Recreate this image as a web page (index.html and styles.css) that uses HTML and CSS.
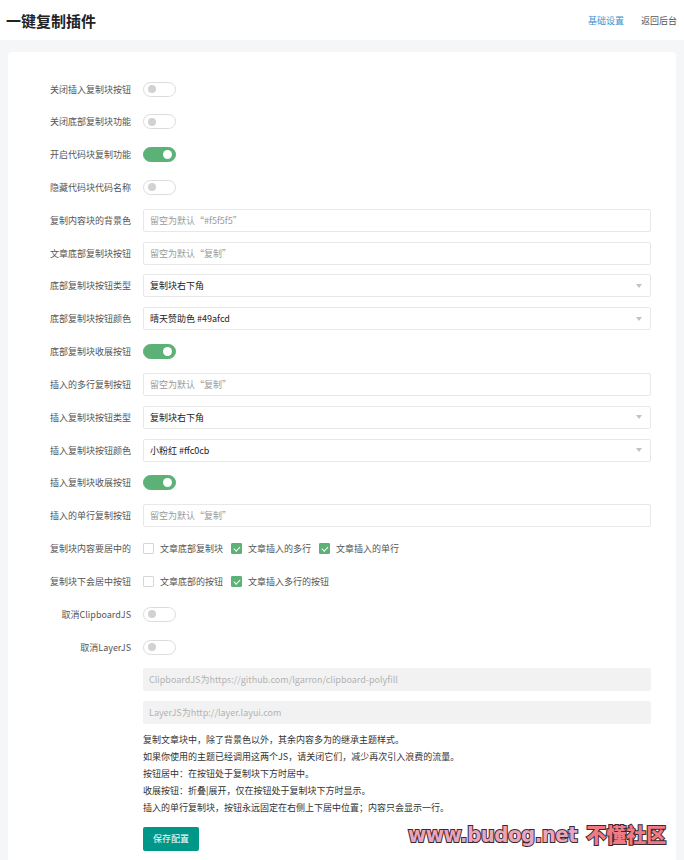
FILE: index.html
```html
<!DOCTYPE html>
<html lang="zh">
<head>
<meta charset="utf-8">
<title>一键复制插件</title>
<link rel="stylesheet" href="styles.css">
</head>
<body>
<header class="topbar">
  <h1 class="title">一键复制插件</h1>
  <nav class="nav">
    <a class="nav-link active">基础设置</a>
    <a class="nav-link">返回后台</a>
  </nav>
</header>
<main class="page">
  <section class="card">
    <div class="form">
      <div class="row"><label class="label">关闭插入复制块按钮</label><span class="switch"><span class="knob"></span></span></div>
      <div class="row"><label class="label">关闭底部复制块功能</label><span class="switch"><span class="knob"></span></span></div>
      <div class="row"><label class="label">开启代码块复制功能</label><span class="switch on"><span class="knob"></span></span></div>
      <div class="row"><label class="label">隐藏代码块代码名称</label><span class="switch"><span class="knob"></span></span></div>
      <div class="row"><label class="label">复制内容块的背景色</label><input class="input" placeholder="留空为默认“#f5f5f5”"></div>
      <div class="row"><label class="label">文章底部复制块按钮</label><input class="input" placeholder="留空为默认“复制”"></div>
      <div class="row"><label class="label">底部复制块按钮类型</label><div class="select"><span>复制块右下角</span><i class="arrow"></i></div></div>
      <div class="row"><label class="label">底部复制块按钮颜色</label><div class="select"><span>晴天赞助色 #49afcd</span><i class="arrow"></i></div></div>
      <div class="row"><label class="label">底部复制块收展按钮</label><span class="switch on"><span class="knob"></span></span></div>
      <div class="row"><label class="label">插入的多行复制按钮</label><input class="input" placeholder="留空为默认“复制”"></div>
      <div class="row"><label class="label">插入复制块按钮类型</label><div class="select"><span>复制块右下角</span><i class="arrow"></i></div></div>
      <div class="row"><label class="label">插入复制块按钮颜色</label><div class="select"><span>小粉红 #ffc0cb</span><i class="arrow"></i></div></div>
      <div class="row"><label class="label">插入复制块收展按钮</label><span class="switch on"><span class="knob"></span></span></div>
      <div class="row"><label class="label">插入的单行复制按钮</label><input class="input" placeholder="留空为默认“复制”"></div>
      <div class="row"><label class="label">复制块内容要居中的</label>
        <div class="checks">
          <span class="check"><i class="box"></i>文章底部复制块</span>
          <span class="check"><i class="box checked"></i>文章插入的多行</span>
          <span class="check"><i class="box checked"></i>文章插入的单行</span>
        </div>
      </div>
      <div class="row"><label class="label">复制块下会居中按钮</label>
        <div class="checks">
          <span class="check"><i class="box"></i>文章底部的按钮</span>
          <span class="check"><i class="box checked"></i>文章插入多行的按钮</span>
        </div>
      </div>
      <div class="row"><label class="label">取消ClipboardJS</label><span class="switch"><span class="knob"></span></span></div>
      <div class="row"><label class="label">取消LayerJS</label><span class="switch"><span class="knob"></span></span></div>
      <div class="row"><span class="label"></span><div class="readonly">ClipboardJS为https://github.com/lgarron/clipboard-polyfill</div></div>
      <div class="row"><span class="label"></span><div class="readonly">LayerJS为http://layer.layui.com</div></div>
    </div>
    <div class="notes">
      <p>复制文章块中，除了背景色以外，其余内容多为的继承主题样式。</p>
      <p>如果你使用的主题已经调用这两个JS，请关闭它们，减少再次引入浪费的流量。</p>
      <p>按钮居中：在按钮处于复制块下方时居中。</p>
      <p>收展按钮：折叠|展开，仅在按钮处于复制块下方时显示。</p>
      <p>插入的单行复制块，按钮永远固定在右侧上下居中位置；内容只会显示一行。</p>
      <button class="btn">保存配置</button>
    </div>
  </section>
</main>
<div class="watermark"><span class="wm-url">www.budog.net</span><span class="wm-cn">不懂社区</span></div>
</body>
</html>
```
FILE: styles.css
```css
* { box-sizing: border-box; }
html, body { margin: 0; padding: 0; }
body {
  background: #f4f6f8;
  font-family: "Noto Sans CJK SC", "Open Sans", "Liberation Sans", sans-serif;
  font-size: 9px;
  color: #333;
  height: 860px;
  overflow: hidden;
  position: relative;
}
.topbar {
  height: 40px;
  background: #fff;
  display: flex;
  align-items: center;
  justify-content: space-between;
  padding: 0 7px 0 6px;
}
.title {
  margin: 0;
  font-size: 15px;
  font-weight: 700;
  color: #222;
  letter-spacing: 0;
}
.nav { display: flex; gap: 17px; }
.nav-link { font-size: 9px; color: #555; }
.nav-link.active { color: #3d8fcf; }
.page { padding: 12px 8px 0; }
.card {
  background: #fff;
  border-radius: 4px;
  padding: 25.5px 25px 30px 0;
  min-height: 820px;
}
.form { display: flex; flex-direction: column; gap: 9.84px; }
.row { display: flex; align-items: center; height: 23px; }
.label {
  width: 123px;
  flex: none;
  margin-right: 12px;
  text-align: right;
  color: #555;
  font-size: 9px;
  white-space: nowrap;
}
.switch {
  position: relative;
  width: 33px;
  height: 15px;
  border: 1px solid #dcdcdc;
  border-radius: 8px;
  background: #fff;
}
.switch .knob {
  position: absolute;
  top: 2.5px;
  left: 4px;
  width: 8px;
  height: 8px;
  border-radius: 50%;
  background: #d2d2d2;
}
.switch.on { background: #5cb176; border-color: #5cb176; }
.switch.on .knob { left: auto; right: 3px; top: 2px; width: 9px; height: 9px; background: #fff; }
.input, .select, .readonly {
  width: 508px;
  height: 23px;
  border: 1px solid #e8e8e8;
  border-radius: 2px;
  padding: 0 0 0 6px;
  font-family: inherit;
  font-size: 9px;
  color: #333;
  background: #fff;
  outline: none;
}
.input::placeholder { color: #9a9a9a; }
.select {
  display: flex;
  align-items: center;
  justify-content: space-between;
  padding-right: 8px;
  color: #222;
}
.arrow {
  width: 0;
  height: 0;
  border-left: 3.5px solid transparent;
  border-right: 3.5px solid transparent;
  border-top: 4px solid #c2c2c2;
}
.readonly {
  display: flex;
  align-items: center;
  background: #f2f2f2;
  border-color: #f2f2f2;
  color: #b3b3b3;
  padding-left: 5px;
}
.checks { display: flex; align-items: center; }
.check { display: flex; align-items: center; margin-right: 8px; color: #555; }
.box {
  width: 11px;
  height: 11px;
  border: 1px solid #d6d6d6;
  border-radius: 1px;
  margin-right: 6px;
  background: #fff;
  position: relative;
}
.box.checked { background: #5cb176; border-color: #5cb176; }
.box.checked::after {
  content: "";
  position: absolute;
  left: 3px;
  top: 1px;
  width: 2.5px;
  height: 5px;
  border-right: 1.2px solid #fff;
  border-bottom: 1.2px solid #fff;
  transform: rotate(45deg);
}
.notes { padding-left: 135px; margin-top: 7px; }
.notes p { margin: 0; line-height: 17px; color: #333; font-size: 9px; }
.btn {
  margin-top: 10.5px;
  width: 56px;
  height: 24px;
  border: none;
  border-radius: 2px;
  background: #009688;
  color: #fff;
  font-family: inherit;
  font-size: 9px;
}
.watermark {
  position: absolute;
  left: 408px;
  top: 824px;
  display: flex;
  align-items: center;
  gap: 9px;
  font-weight: 900;
  -webkit-text-stroke: 2px #3b2a30;
  paint-order: stroke fill;
  line-height: 1;
}
.wm-url {
  font-family: "DejaVu Sans Condensed", "DejaVu Sans", sans-serif;
  font-weight: 700;
  font-size: 22px;
  color: #eaa5bd;
  letter-spacing: -0.5px;
}
.wm-cn {
  font-family: "Noto Sans CJK SC", sans-serif;
  font-size: 20px;
  color: #f07a83;
}
```
